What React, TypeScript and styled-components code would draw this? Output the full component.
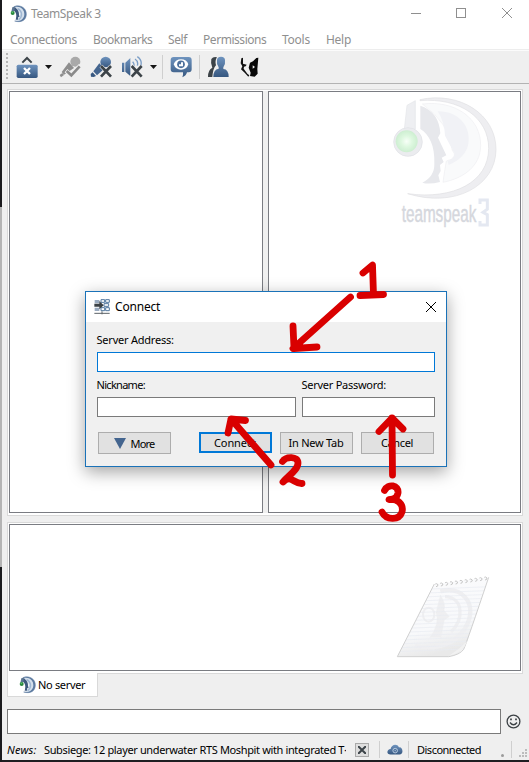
import React from 'react';
import styled, { createGlobalStyle, css } from 'styled-components';

const GlobalStyle = createGlobalStyle`
  * { box-sizing: border-box; }
  body { margin: 0; background: #efefef; }
`;

const Screen = styled.div`
  position: relative;
  display: flex;
  width: 529px;
  height: 762px;
  overflow: hidden;
  background: #efefef;
  color: #000;
  font: 11px/14px 'Noto Sans', 'Open Sans', sans-serif;
`;

const DesktopEdge = styled.div`
  width: 2px;
  flex: none;
  background: linear-gradient(#1b1b1e 0 207px, #b4b4b4 207px 567px, #1b1b1e 567px);
`;

const AppWindow = styled.div`
  flex: 1;
  min-width: 0;
  display: flex;
  flex-direction: column;
  border-bottom: 2px solid #1f1e22;
`;

const Text = styled.span<{ $spacing?: number; $italic?: boolean }>`
  white-space: pre;
  letter-spacing: ${(p) => p.$spacing ?? -0.3}px;
  font-style: ${(p) => (p.$italic ? 'italic' : 'normal')};
`;

const TitleBar = styled.header`
  height: 28px;
  flex: none;
  display: flex;
  align-items: center;
  padding: 0 17px 1px 8px;
  background: #fff;
  color: #8f8f8f;
  font-size: 12px;
`;

const TitleText = styled(Text)`
  margin-left: 4px;
  flex: 1;
`;

const WindowControls = styled.div`
  display: flex;
  gap: 35px;
  margin-top: -1px;
`;

const MenuBar = styled.nav`
  height: 21px;
  flex: none;
  display: flex;
  align-items: center;
  padding: 2px 0 0 8px;
  background: #fff;
  color: #8f8f8f;
  font-size: 12px;
`;

const MenuItem = styled(Text)<{ $width: number }>`
  width: ${(p) => p.$width}px;
`;

const Toolbar = styled.div`
  height: 35px;
  flex: none;
  display: flex;
  align-items: center;
  padding: 0 0 0 4px;
  border-top: 1px solid #ededed;
  border-bottom: 1px solid #b3b3b3;
  box-shadow: inset 0 1px #fbfbfb;
`;

const Handle = styled.div`
  width: 2px;
  height: 27px;
  background: repeating-linear-gradient(#b5b5b5 0 2px, transparent 2px 4px);
`;

const Tool = styled.span<{ $left: number }>`
  display: flex;
  margin-left: ${(p) => p.$left}px;
`;

const Separator = styled.i<{ $left?: number; $height?: number }>`
  width: 1px;
  height: ${(p) => p.$height ?? 24}px;
  margin-left: ${(p) => p.$left ?? 0}px;
  background: #cfcfcf;
`;

const Body = styled.main`
  height: 590px;
  flex: none;
  padding: 5px 5px 0 5px;
  display: flex;
  flex-direction: column;
  gap: 6px;
`;

const frame = css`
  flex: none;
  width: 516px;
  border: 1px solid #d9d9d9;
  background: #fff;
  padding: 1px 1px 2px;
  display: flex;
`;

const SplitView = styled.section`
  ${frame}
  height: 427px;
`;

const Splitter = styled.div`
  width: 5px;
  background: #f0f0f0;
`;

const Pane = styled.div<{ $width: number }>`
  width: ${(p) => p.$width}px;
  border: 1px solid #7a7c82;
  background: #fff;
  display: flex;
  justify-content: flex-end;
`;

const BrandMark = styled.div`
  margin: 3px 23px 0 0;
`;

const ChatFrame = styled.section`
  ${frame}
  height: 152px;
`;

const ChatPane = styled(Pane)`
  align-items: flex-end;
`;

const NotepadMark = styled.div`
  margin: 0 30px 11px 0;
  height: 84px;
`;

const TabStrip = styled.div`
  height: 23px;
  flex: none;
  padding-left: 5px;
  display: flex;
`;

const Tab = styled.div`
  width: 91px;
  margin-top: -1px;
  background: #fff;
  border: 1px solid #d9d9d9;
  border-top: 0;
  display: flex;
  align-items: center;
  padding: 0 0 0 11px;
  gap: 2px;
`;

const MessageRow = styled.div`
  margin-top: 12px;
  padding-left: 5px;
  height: 25px;
  flex: none;
  display: flex;
  align-items: center;
  gap: 5px;
`;

const Field = styled.div<{ $width: number; $height?: number; $active?: boolean }>`
  width: ${(p) => p.$width}px;
  height: ${(p) => p.$height ?? 20}px;
  background: #fff;
  border: 1px solid ${(p) => (p.$active ? '#0078d7' : '#7a7a7a')};
`;

const StatusBar = styled.footer`
  flex: 1;
  display: flex;
  align-items: center;
  padding: 5px 1px 0 5px;
`;

const NewsLabel = styled(Text)`
  width: 37px;
`;

const NewsText = styled(Text)`
  width: 302px;
  overflow: hidden;
`;

const CloseNews = styled.div`
  width: 14px;
  height: 14px;
  margin-left: 9px;
  border: 1px solid #a9a9a9;
  background: #dedede;
  display: flex;
  align-items: center;
  justify-content: center;
`;

const StatusText = styled(Text)`
  margin-left: 8px;
  width: 84px;
`;

const StatusDot = styled.i`
  width: 3px;
  height: 3px;
  border-radius: 50%;
  background: #9b9b9b;
  margin-top: 11px;
`;

const Dialog = styled.div`
  position: absolute;
  left: 85px;
  top: 291px;
  width: 362px;
  height: 176px;
  border: 1px solid #1a72b8;
  background: #f0f0f0;
  box-shadow: 0 5px 16px rgba(0, 0, 0, 0.36);
  display: flex;
  flex-direction: column;
`;

const DialogTitle = styled.div`
  height: 30px;
  flex: none;
  background: #fff;
  display: flex;
  align-items: center;
  padding: 0 10px 1px 8px;
  font-size: 12px;
`;

const DialogName = styled(Text)`
  flex: 1;
  margin-left: 5px;
`;

const Form = styled.div`
  padding: 11px 10px 0 11px;
`;

const Group = styled.div`
  height: 45px;
`;

const Row = styled.div`
  display: flex;
  gap: 6px;
`;

const Label = styled(Text)`
  display: block;
  height: 19px;
  margin-left: -0.5px;
`;

const Actions = styled.div`
  display: flex;
  padding: 9px 1px 0 1px;
  gap: 8px;
  align-items: flex-start;
`;

const Button = styled.div<{ $primary?: boolean; $gap?: number }>`
  width: 73px;
  height: ${(p) => (p.$primary ? 21 : 22)}px;
  margin-right: ${(p) => p.$gap ?? 0}px;
  padding-right: 1px;
  border: ${(p) => (p.$primary ? '2px solid #0078d7' : '1px solid #adadad')};
  background: #e1e1e1;
  display: flex;
  align-items: center;
  justify-content: center;
  gap: 5px;
`;

const MoreText = styled(Text)`
  padding-top: 2px;
`;

const Annotations = styled.svg`
  position: absolute;
  left: 0;
  top: 0;
  pointer-events: none;
`;

const BlueGradient = ({ id }: { id: string }) => (
  <linearGradient id={id} x1="0" y1="0" x2="0" y2="1">
    <stop offset="0" stopColor="#6f94bf" />
    <stop offset="1" stopColor="#365780" />
  </linearGradient>
);

const AppIcon = () => (
  <svg width="17" height="18" viewBox="28 12 51 54">
    <path d="M42 16C62 10 78 23 77 41C76 58 61 66 42 60C61 61 70 52 70 39C70 25 59 18 42 20Z" fill="#5d7ba1" stroke="#5d7ba1" strokeWidth="1.5" />
    <path d="M42 18C58 14 72 25 71 41C70 54 58 61 48 59C60 51 61 34 47 22Z" fill="#d3dfec" />
    <path d="M51 23C65 30 67 46 54 56" fill="none" stroke="#9db5d1" strokeWidth="4" />
    <path d="M41 19C50 23 56 31 55 42L57 47L53 48L52 56H45C49 44 47 32 37 28Z" fill="#3d587c" />
    <path d="M32 32L35 19L43 16L41 30Z" fill="#5b7592" />
    <circle cx="36" cy="36" r="6" fill="#27863c" />
    <circle cx="35" cy="34" r="2.5" fill="#5ac06c" />
  </svg>
);

const Cross = ({ size, color, width = 1 }: { size: number; color: string; width?: number }) => (
  <svg width={size} height={size} viewBox={`0 0 ${size} ${size}`}>
    <path d={`M0 0L${size} ${size}M${size} 0L0 ${size}`} stroke={color} strokeWidth={width} />
  </svg>
);

const Caret = () => (
  <svg width="7" height="4" viewBox="0 0 7 4">
    <path d="M0 0H7L3.5 4Z" fill="#151515" />
  </svg>
);

const ConnectIcon = () => (
  <svg width="22" height="24" viewBox="48 165 66 72">
    <defs><BlueGradient id="connectBlue" /></defs>
    <path d="M67 188L81 174L95 188" fill="none" stroke="#3c4348" strokeWidth="6" />
    <rect x="50" y="194" width="63" height="40" rx="5" fill="url(#connectBlue)" />
    <path d="M72 204L90 222M90 204L72 222" stroke="#fff" strokeWidth="7" />
  </svg>
);

const MicAwayIcon = () => (
  <svg width="22" height="24" viewBox="177 165 66 72">
    <circle cx="226" cy="185" r="15" fill="#a9a9a9" />
    <path d="M207 187L222 204L192 224L185 216Z" fill="#8e8e8e" />
    <path d="M179 225L187 219L192 225L183 232Z" fill="#8e8e8e" />
    <path d="M198 212L214 226L242 196" fill="none" stroke="#efefef" strokeWidth="13" />
    <path d="M200 213L214 226L239 199" fill="none" stroke="#8a8a8a" strokeWidth="8" />
  </svg>
);

const MicMuteIcon = () => (
  <svg width="22" height="24" viewBox="270 165 66 72">
    <defs><BlueGradient id="micBlue" /></defs>
    <circle cx="317" cy="186" r="16" fill="url(#micBlue)" />
    <path d="M298 190L313 206L291 226L280 214Z" fill="#44658f" />
    <path d="M278 217L288 228L281 231L273 230L272 222Z" fill="#365780" />
    <path d="M303 198L333 230M333 198L303 230" stroke="#efefef" strokeWidth="12" />
    <path d="M303 198L333 230M333 198L303 230" stroke="#3c4348" strokeWidth="8" />
  </svg>
);

const SpeakerMuteIcon = () => (
  <svg width="22" height="24" viewBox="363 165 66 72">
    <defs><BlueGradient id="speakerBlue" /></defs>
    <path d="M366 188H373V216H366ZM376 188L391 174V228L376 215Z" fill="url(#speakerBlue)" />
    <path d="M398 185Q404 191 401 200M405 177Q416 184 412 197M412 170Q428 181 422 198" fill="none" stroke="#7c9ec6" strokeWidth="4" />
    <path d="M395 198L425 230M425 198L395 230" stroke="#efefef" strokeWidth="12" />
    <path d="M395 198L425 230M425 198L395 230" stroke="#3c4348" strokeWidth="8" />
  </svg>
);

const BubbleEyeIcon = () => (
  <svg width="22" height="24" viewBox="510 165 66 72">
    <defs><BlueGradient id="bubbleBlue" /></defs>
    <path d="M521 171H566Q575 171 575 180V208Q575 217 566 217H561Q559 227 547 232Q550 225 549 217H521Q512 217 512 208V180Q512 171 521 171Z" fill="url(#bubbleBlue)" />
    <path d="M521 193Q527 178 543 178Q560 178 565 193Q560 209 543 209Q527 209 521 193Z" fill="#fff" />
    <circle cx="543" cy="193" r="11.5" fill="#4d709c" />
    <path d="M543 193V187H549V199H537V193Z" fill="#fff" />
  </svg>
);

const ContactsIcon = () => (
  <svg width="22" height="24" viewBox="621 165 66 72">
    <defs><BlueGradient id="contactsBlue" /></defs>
    <path d="M634 177Q640 169 651 172Q644 182 648 196Q639 205 637 231H624Q623 211 637 203Q631 190 634 177Z" fill="#3c4348" />
    <path d="M651 181Q651 170 663 170Q675 170 675 181Q677 193 670 202V207Q686 208 686 231H640Q640 208 656 206V202Q649 193 651 181Z" fill="url(#contactsBlue)" />
  </svg>
);

const HornsIcon = () => (
  <svg width="20" height="24" viewBox="719 165 60 72">
    <path d="M723 175L728 173V191L739 194L736 199L731 200L730 206L741 221L747 226L744 230L733 218L722 208L726 199L721 190Z" fill="#111" />
    <path d="M774 173L771 207L772 221L763 230L749 228L751 218L745 203L749 188L758 184L768 174Z" fill="#080808" />
    <path d="M757 196L764 201L757 206Z" fill="#efefef" />
  </svg>
);

const BrandLogo = () => (
  <svg width="105" height="133" viewBox="21 30 315 399">
    <defs>
      <radialGradient id="brandEar"><stop offset="0" stopColor="#f8fff8" /><stop offset=".5" stopColor="#def8e0" /><stop offset="1" stopColor="#cdeed1" /></radialGradient>
      <filter id="brandShade" x="-10%" y="-10%" width="120%" height="120%"><feGaussianBlur stdDeviation="1.2" /></filter>
    </defs>
    <g filter="url(#brandShade)">
      <path d="M105 44C224 18 333 88 333 193C333 303 209 370 68 326C206 345 311 291 311 190C311 98 224 37 105 47Z" fill="#eeeef1" stroke="#dfdfe3" strokeWidth="2" />
      <path d="M112 57C211 45 288 100 287 182C286 242 239 279 174 292Q178 262 181 246L184 228Q222 219 202 196Q190 110 112 57Z" fill="#f9fafb" stroke="#eeeff2" strokeWidth="2" />
      <path d="M158 79C223 78 259 127 250 177Q242 218 191 240L188 229Q217 214 205 199L180 152Q178 108 158 79Z" fill="#f1f2f6" />
      <path d="M106 62C145 74 164 105 166 145L159 158L184 211L170 218L176 231L165 240L167 258L160 271L165 291Q132 299 112 293Q149 274 148 236C150 183 133 148 106 132Z" fill="#e7e8ec" />
      <path d="M66 61L91 47V133Q74 130 57 142Z" fill="#eeeff2" stroke="#e4e5e9" strokeWidth="2" />
      <circle cx="69" cy="171" r="43" fill="#ebecef" stroke="#e0e1e5" strokeWidth="2" />
      <circle cx="65" cy="169" r="33" fill="url(#brandEar)" />
    </g>
    <text
      transform="translate(50 410) scale(1 1.4)"
      fontSize="50"
      textLength="224"
      lengthAdjust="spacingAndGlyphs"
      fontFamily="Liberation Sans, sans-serif"
      fill="#d5d7dd"
      stroke="#d5d7dd"
      strokeWidth="1"
    >
      teamspeak
    </text>
    <path d="M285 357V345H307V373L294 382L307 389V420H285V408" fill="none" stroke="#e4e8f1" strokeWidth="9" />
  </svg>
);

const NotepadDrawing = () => (
  <svg width="95" height="84" viewBox="45 45 285 252">
    <defs>
      <linearGradient id="paper" x1="0" y1="0" x2=".3" y2="1">
        <stop offset="0" stopColor="#fbfbfc" /><stop offset=".7" stopColor="#f8f9fb" /><stop offset="1" stopColor="#e9e9e9" />
      </linearGradient>
      <clipPath id="paperClip"><path d="M163 72L326 52L262 243Q256 279 206 290H52Z" /></clipPath>
    </defs>
    <path d="M163 72L326 52L262 243Q250 282 206 290H52Z" fill="url(#paper)" />
    <g clipPath="url(#paperClip)">
      <g fill="none" stroke="#efeff1">
        <path d="M181 94C245 77 287 126 264 188C241 246 176 273 105 258" strokeWidth="13" />
        <path d="M195 110C249 112 254 176 213 216" strokeWidth="10" />
        <path d="M181 105Q198 130 192 151L208 170L193 180L183 232H150Q180 190 168 158Z" fill="#efeff1" />
        <ellipse cx="146" cy="164" rx="17" ry="21" strokeWidth="6" />
      </g>
      {Array.from({ length: 17 }, (_, i) => (
        <path key={i} d={`M50 ${91 + i * 11.5}L330 ${80 + i * 11.5}`} stroke="#e9ebf1" strokeWidth="2" />
      ))}
    </g>
    <path d="M163 72L52 290H206Q240 284 251 268Q263 240 326 52" fill="none" stroke="#d0d0d0" strokeWidth="3" />
    <path d="M206 288Q236 270 262 243Q250 280 206 288Z" fill="#f1f1f1" />
    {Array.from({ length: 11 }, (_, i) => (
      <path key={i} d={`M${168 + i * 14.7} ${80 - i * 2}q6 0 6 -6q-5 -5 -8 -2`} fill="none" stroke="#c6c6c6" strokeWidth="3" />
    ))}
  </svg>
);

const DialogIcon = () => (
  <svg width="16" height="16" viewBox="42 40 48 48">
    <path d="M44 43H58V53H44ZM44 66H58V76H44Z" fill="#9aabc0" />
    <path d="M63 42H74V50H63ZM77 42H88V50H77ZM72 54H86V62H72ZM63 66H74V75H63ZM77 66H88V75H77Z" fill="#fff" stroke="#51779f" strokeWidth="3" />
    <path d="M43 54H58V46L71 59L58 71V63H43Z" fill="#3b4145" />
    <path d="M43 83H89M66 77V86" stroke="#5c6267" strokeWidth="3" />
  </svg>
);

const SmileIcon = () => (
  <svg width="15" height="15" viewBox="0 0 15 15" fill="none" stroke="#3b4044" strokeWidth="1.3">
    <circle cx="7.5" cy="7.5" r="6.4" />
    <path d="M4 8.500Q7.500 13 11 8.500" />
    <path d="M5 4.600V6.200M10 4.600V6.200" strokeWidth="1.7" />
  </svg>
);

const CloudIcon = () => (
  <svg width="16" height="11" viewBox="590 163 49 33">
    <defs><BlueGradient id="cloudBlue" /></defs>
    <path d="M601 195C586 194 590 178 601 178C603 165 620 159 627 173C639 171 642 195 628 195Z" fill="url(#cloudBlue)" />
    <circle cx="615" cy="183" r="7" fill="none" stroke="#b8cbe0" strokeWidth="3" />
    <circle cx="615" cy="183" r="2" fill="#b8cbe0" />
  </svg>
);

const SizeGrip = () => (
  <svg width="8" height="8" viewBox="0 0 8 8" fill="#bcbcbc">
    <path d="M6 0h2v2h-2zM3 3h2v2h-2zM6 3h2v2h-2zM0 6h2v2h-2zM3 6h2v2h-2zM6 6h2v2h-2z" />
  </svg>
);

const GripSlot = styled(Tool)`
  margin-top: 7px;
`;

const MoreArrow = () => (
  <svg width="12" height="11" viewBox="0 0 12 11">
    <path d="M0 0H12L6 11Z" fill="#44658f" />
  </svg>
);

const menus: { name: string; width: number; spacing: number }[] = [
  { name: 'Connections', width: 83, spacing: -0.28 },
  { name: 'Bookmarks', width: 75, spacing: -0.5 },
  { name: 'Self', width: 35, spacing: -0.4 },
  { name: 'Permissions', width: 79, spacing: -0.45 },
  { name: 'Tools', width: 44, spacing: -0.25 },
  { name: 'Help', width: 40, spacing: -0.28 },
];

export default function App() {
  return (
    <Screen>
      <GlobalStyle />
      <DesktopEdge />
      <AppWindow>
        <TitleBar>
          <AppIcon />
          <TitleText $spacing={-0.42}>TeamSpeak 3</TitleText>
          <WindowControls>
            <svg width="10" height="10"><path d="M0 5.500H10" stroke="#8f8f8f" /></svg>
            <svg width="11" height="10"><rect x=".5" y=".5" width="9" height="9" fill="none" stroke="#8f8f8f" /></svg>
            <Cross size={10} color="#8f8f8f" />
          </WindowControls>
        </TitleBar>
        <MenuBar>
          {menus.map((m) => (
            <MenuItem key={m.name} $width={m.width} $spacing={m.spacing}>{m.name}</MenuItem>
          ))}
        </MenuBar>
        <Toolbar>
          <Handle />
          <Tool $left={8}><ConnectIcon /></Tool>
          <Tool $left={7}><Caret /></Tool>
          <Tool $left={7}><MicAwayIcon /></Tool>
          <Tool $left={9}><MicMuteIcon /></Tool>
          <Tool $left={9}><SpeakerMuteIcon /></Tool>
          <Tool $left={7}><Caret /></Tool>
          <Separator $left={5} />
          <Tool $left={7}><BubbleEyeIcon /></Tool>
          <Separator $left={7} />
          <Tool $left={7}><ContactsIcon /></Tool>
          <Tool $left={11}><HornsIcon /></Tool>
        </Toolbar>
        <Body>
          <SplitView>
            <Pane $width={254} />
            <Splitter />
            <Pane $width={253}>
              <BrandMark><BrandLogo /></BrandMark>
            </Pane>
          </SplitView>
          <ChatFrame>
            <ChatPane $width={512}>
              <NotepadMark><NotepadDrawing /></NotepadMark>
            </ChatPane>
          </ChatFrame>
        </Body>
        <TabStrip>
          <Tab>
            <AppIcon />
            <Text $spacing={-0.33}>No server</Text>
          </Tab>
        </TabStrip>
        <MessageRow>
          <Field $width={494} $height={25} />
          <SmileIcon />
        </MessageRow>
        <StatusBar>
          <NewsLabel $italic $spacing={0.2}>News:</NewsLabel>
          <NewsText $spacing={-0.36}>Subsiege: 12 player underwater RTS Moshpit with integrated T·</NewsText>
          <CloseNews><Cross size={8} color="#3c4348" width={2} /></CloseNews>
          <Separator $left={10} $height={17} />
          <Tool $left={7}><CloudIcon /></Tool>
          <Separator $left={5} $height={17} />
          <StatusText $spacing={-0.5}>Disconnected</StatusText>
          <StatusDot />
          <Separator $left={7} $height={17} />
          <GripSlot $left={7}><SizeGrip /></GripSlot>
        </StatusBar>
      </AppWindow>

      <Dialog>
        <DialogTitle>
          <DialogIcon />
          <DialogName $spacing={-0.2}>Connect</DialogName>
          <Cross size={10} color="#000" />
        </DialogTitle>
        <Form>
          <Group>
            <Label $spacing={-0.22}>Server Address:</Label>
            <Field $width={338} $active />
          </Group>
          <Row>
            <Group>
              <Label $spacing={-0.7}>Nickname:</Label>
              <Field $width={199} />
            </Group>
            <Group>
              <Label $spacing={-0.26}>Server Password:</Label>
              <Field $width={133} />
            </Group>
          </Row>
          <Actions>
            <Button $gap={20}><MoreArrow /><MoreText $spacing={-0.8}>More</MoreText></Button>
            <Button $primary><Text $spacing={-0.1}>Connect</Text></Button>
            <Button><Text $spacing={-0.24}>In New Tab</Text></Button>
            <Button><Text $spacing={-0.35}>Cancel</Text></Button>
          </Actions>
        </Form>
      </Dialog>

      <Annotations width="529" height="762" viewBox="0 0 529 762" fill="none" stroke="#d90000" strokeWidth="6.8" strokeLinecap="round" strokeLinejoin="round">
        <path d="M350.500 297L293 348.500M293 326L294 348.500L317 347" />
        <path d="M363 273L372.500 265L373.500 295M360 295.500L383.500 294.500" />
        <path d="M271 465L231 419M228 433L231 419L245.500 420.500" />
        <path d="M282.500 461.500C286 456 298 456 298 463C298 470 288 476 283 482C291 474 294 484 302 483.500" />
        <path d="M392.500 475L392 418M379 431.500L392 418L403 429" />
        <path d="M384.500 490.500C388 483 399 485 398 493C397 499 391 500 389 499.500C397 498 404 504 402 512C399 521 386 520 382 512" />
      </Annotations>
    </Screen>
  );
}
